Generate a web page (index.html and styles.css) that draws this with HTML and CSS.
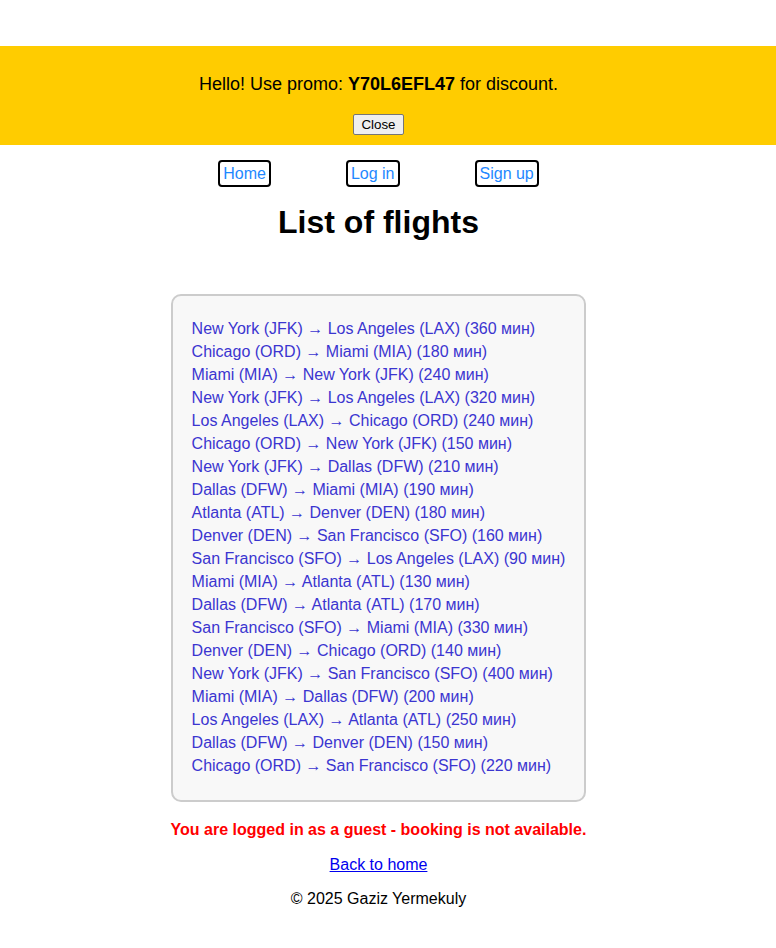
FILE: index.html
```html
<!DOCTYPE html>
<html>
<head>
<meta charset="utf-8">
<title>List of flights</title>
<link rel="stylesheet" href="styles.css">
</head>
<body>
<div class="banner">
  <p class="promo">Hello! Use promo: <strong>Y70L6EFL47</strong> for discount.</p>
  <button class="close-btn">Close</button>
</div>
<nav class="nav">
  <a href="#" class="nav-link">Home</a>
  <a href="#" class="nav-link">Log in</a>
  <a href="#" class="nav-link">Sign up</a>
</nav>
<h1 class="title">List of flights</h1>
<div class="card-wrap">
  <ul class="flights">
    <li><a href="#">New York (JFK) → Los Angeles (LAX) (360 мин)</a></li>
    <li><a href="#">Chicago (ORD) → Miami (MIA) (180 мин)</a></li>
    <li><a href="#">Miami (MIA) → New York (JFK) (240 мин)</a></li>
    <li><a href="#">New York (JFK) → Los Angeles (LAX) (320 мин)</a></li>
    <li><a href="#">Los Angeles (LAX) → Chicago (ORD) (240 мин)</a></li>
    <li><a href="#">Chicago (ORD) → New York (JFK) (150 мин)</a></li>
    <li><a href="#">New York (JFK) → Dallas (DFW) (210 мин)</a></li>
    <li><a href="#">Dallas (DFW) → Miami (MIA) (190 мин)</a></li>
    <li><a href="#">Atlanta (ATL) → Denver (DEN) (180 мин)</a></li>
    <li><a href="#">Denver (DEN) → San Francisco (SFO) (160 мин)</a></li>
    <li><a href="#">San Francisco (SFO) → Los Angeles (LAX) (90 мин)</a></li>
    <li><a href="#">Miami (MIA) → Atlanta (ATL) (130 мин)</a></li>
    <li><a href="#">Dallas (DFW) → Atlanta (ATL) (170 мин)</a></li>
    <li><a href="#">San Francisco (SFO) → Miami (MIA) (330 мин)</a></li>
    <li><a href="#">Denver (DEN) → Chicago (ORD) (140 мин)</a></li>
    <li><a href="#">New York (JFK) → San Francisco (SFO) (400 мин)</a></li>
    <li><a href="#">Miami (MIA) → Dallas (DFW) (200 мин)</a></li>
    <li><a href="#">Los Angeles (LAX) → Atlanta (ATL) (250 мин)</a></li>
    <li><a href="#">Dallas (DFW) → Denver (DEN) (150 мин)</a></li>
    <li><a href="#">Chicago (ORD) → San Francisco (SFO) (220 мин)</a></li>
  </ul>
</div>
<p class="warning">You are logged in as a guest - booking is not available.</p>
<p class="back"><a href="#">Back to home</a></p>
<footer class="footer">© 2025 Gaziz Yermekuly</footer>
</body>
</html>
```

FILE: styles.css
```css
html, body {
  margin: 0;
  padding: 0;
  background: #fff;
}
body {
  font-family: "Liberation Sans", Arial, sans-serif;
  font-size: 16px;
  color: #000;
  text-align: center;
  padding-right: 19px;
}
.banner {
  margin-top: 46px;
  margin-right: -19px;
  background: #ffcc00;
  padding: 10px 19px 10px 0;
}
.promo {
  font-size: 18px;
  margin: 18px 0 19px;
  line-height: 21px;
}
.close-btn {
  font-family: "Liberation Sans", Arial, sans-serif;
  font-size: 13.33px;
  padding: 1px 7px;
  height: 21px;
  border: 1px solid #767676;
  border-radius: 2px;
  background: #efefef;
  color: #000;
  vertical-align: top;
}
.nav {
  display: flex;
  justify-content: center;
  gap: 75px;
  margin: 15px 0 0;
}
.nav-link {
  display: block;
  color: #1e88ff;
  text-decoration: none;
  border: 2px solid #000;
  border-radius: 4px;
  padding: 2px 3px;
  line-height: 19px;
}
.title {
  font-size: 32px;
  line-height: 37px;
  margin: 17px 0 53px;
}
.card-wrap {
  display: flex;
  justify-content: center;
}
.flights {
  list-style: none;
  margin: 0;
  padding: 21px 19px 23px 19px;
  background: #f8f8f8;
  border: 2px solid #cccccc;
  border-radius: 10px;
  text-align: left;
  line-height: 23px;
}
.flights a {
  color: #3b35d0;
  text-decoration: none;
}
.warning {
  color: #ff0000;
  font-weight: bold;
  margin: 19px 0 0;
  line-height: 18px;
}
.back {
  margin: 17px 0 0;
  line-height: 18px;
}
.back a {
  color: #0000ee;
}
.footer {
  margin: 16px 0 0;
  line-height: 18px;
}
```
